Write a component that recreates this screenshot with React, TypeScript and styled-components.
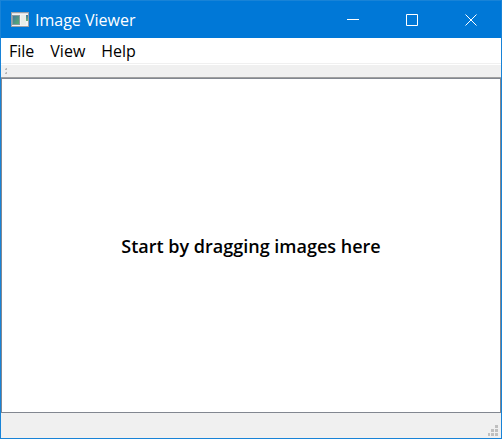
import React from "react";
import styled, { createGlobalStyle } from "styled-components";

const GlobalStyle = createGlobalStyle`
  * { box-sizing: border-box; }
  body { margin: 0; }
`;

const Window = styled.div`
  display: flex;
  flex-direction: column;
  min-height: 100vh;
  border: 1px solid #1883d7;
  background: #fff;
  color: #000;
  font: 16px/24px "Open Sans", "Noto Sans", sans-serif;
`;

const TitleBar = styled.header`
  display: flex;
  align-items: center;
  height: 37px;
  padding: 0 1px 0 10px;
  background: #0078d7;
  color: #fff;
`;

const Title = styled.h1`
  flex: 1;
  margin: 0 0 0 6px;
  font-size: 16px;
  font-weight: 400;
  line-height: 24px;
`;

const CaptionButton = styled.button`
  display: flex;
  align-items: center;
  justify-content: center;
  width: 58px;
  height: 36px;
  padding: 0;
  border: 0;
  background: transparent;
  color: inherit;
`;

const CaptionButtons = styled.div`
  display: flex;
  gap: 1px;
`;

const MenuBar = styled.nav`
  display: flex;
  height: 26px;
  border-bottom: 1px solid #f0f0f0;
`;

const MenuButton = styled.button`
  padding: 0 8px;
  border: 0;
  background: transparent;
  color: inherit;
  font: inherit;
  line-height: 24px;
`;

const ToolBar = styled.div`
  display: flex;
  align-items: center;
  height: 14px;
  padding-left: 4px;
  border-top: 1px solid #fff;
  border-bottom: 1px solid #a0a0a0;
  background: #f0f0f0;
`;

const DropArea = styled.main`
  display: flex;
  flex: 1;
  align-items: center;
  justify-content: center;
  border: 1px solid #828790;
`;

const Hint = styled.p`
  margin: 0;
  font-size: 18px;
  font-weight: 600;
  line-height: 24px;
`;

const StatusBar = styled.footer`
  display: flex;
  align-items: flex-end;
  justify-content: flex-end;
  height: 25px;
  padding: 0 2px 2px 0;
  background: #f0f0f0;
`;

const AppIcon = () => (
  <svg width="18" height="15" viewBox="0 0 18 15" aria-hidden="true">
    <defs>
      <linearGradient id="screen" x1="0" y1="0" x2="1" y2="1">
        <stop offset="0" stopColor="#4478a0" />
        <stop offset="1" stopColor="#58b070" />
      </linearGradient>
      <linearGradient id="side" x1="0" y1="0" x2="0" y2="1">
        <stop offset="0" stopColor="#4478a0" />
        <stop offset="1" stopColor="#70b878" />
      </linearGradient>
    </defs>
    <rect width="18" height="15" fill="#9aa0a6" />
    <rect x="1" y="1" width="16" height="13" fill="#f4f4f4" />
    <rect x="1" y="1" width="16" height="1" fill="#dedee0" />
    <rect x="1" y="3" width="8" height="10" fill="#8a9ca0" />
    <rect x="2" y="4" width="6" height="8" fill="url(#screen)" />
    <rect x="10" y="3" width="5" height="10" fill="#e9eee9" />
    <rect x="15" y="3" width="2" height="6" fill="url(#side)" />
  </svg>
);

const captions = [
  { label: "Minimize", path: "M0 5.5H12" },
  { label: "Maximize", path: "M.5 .5H11.5V11.5H.5Z" },
  { label: "Close", path: "M.5 .5L11.5 11.5M11.5 .5L.5 11.5" },
];

const gripDots = [[7, 0], [3, 4], [7, 4], [0, 8], [3, 8], [7, 8]];

export default function App() {
  return (
    <>
      <GlobalStyle />
      <Window>
        <TitleBar>
          <AppIcon />
          <Title>Image Viewer</Title>
          <CaptionButtons>
            {captions.map(({ label, path }) => (
              <CaptionButton key={label} type="button" aria-label={label}>
                <svg width="12" height="12" viewBox="0 0 12 12" fill="none" stroke="currentColor">
                  <path d={path} />
                </svg>
              </CaptionButton>
            ))}
          </CaptionButtons>
        </TitleBar>
        <MenuBar>
          {["File", "View", "Help"].map((name) => (
            <MenuButton key={name} type="button">{name}</MenuButton>
          ))}
        </MenuBar>
        <ToolBar>
          <svg width="3" height="6" viewBox="0 0 3 6" aria-hidden="true">
            <path d="M0 0h2v2h-2zM0 4h2v2h-2z" fill="#b8b8b8" />
            <path d="M0 0h1v1h-1zM0 4h1v1h-1z" fill="#dcdcdc" />
          </svg>
        </ToolBar>
        <DropArea>
          <Hint>Start by dragging images here</Hint>
        </DropArea>
        <StatusBar>
          <svg width="11" height="11" viewBox="0 0 11 11" aria-hidden="true">
            {gripDots.map(([x, y]) => (
              <rect key={`${x}-${y}`} x={x} y={y} width={x === 0 ? 2 : 3} height="3" fill="#bfbfbf" />
            ))}
          </svg>
        </StatusBar>
      </Window>
    </>
  );
}
